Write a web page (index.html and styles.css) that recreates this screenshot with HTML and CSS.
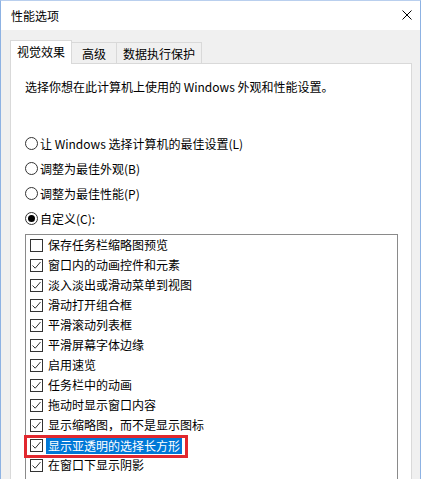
FILE: index.html
```html
<!DOCTYPE html>
<html lang="zh-CN">
<head>
<meta charset="utf-8">
<title>性能选项</title>
<link rel="stylesheet" href="styles.css">
</head>
<body>
<div class="window">
  <div class="titlebar">
    <span class="title">性能选项</span>
    <svg class="close" width="10" height="10" viewBox="0 0 10 10"><path d="M0.5 0.5 L9.5 9.5 M9.5 0.5 L0.5 9.5" stroke="#000" stroke-width="1" fill="none"/></svg>
  </div>
  <div class="content">
    <div class="tabs">
      <div class="tab tab-active tab-w1">视觉效果</div>
      <div class="tab tab-w2">高级</div>
      <div class="tab tab-w3">数据执行保护</div>
    </div>
    <div class="panel">
      <div class="desc">选择你想在此计算机上使用的 Windows 外观和性能设置。</div>
      <div class="radios">
        <div class="radio-row"><span class="radio"></span><span>让 Windows 选择计算机的最佳设置(L)</span></div>
        <div class="radio-row"><span class="radio"></span><span>调整为最佳外观(B)</span></div>
        <div class="radio-row"><span class="radio"></span><span>调整为最佳性能(P)</span></div>
        <div class="radio-row"><span class="radio radio-on"></span><span>自定义(C):</span></div>
      </div>
      <div class="list">
        <div class="item"><span class="cb"></span><span class="label">保存任务栏缩略图预览</span></div>
        <div class="item"><span class="cb"><svg width="11" height="11" viewBox="0 0 11 11"><path d="M1.5 5.5 L4.2 8.2 L9.5 2" stroke="#333" stroke-width="1" fill="none"/></svg></span><span class="label">窗口内的动画控件和元素</span></div>
        <div class="item"><span class="cb"><svg width="11" height="11" viewBox="0 0 11 11"><path d="M1.5 5.5 L4.2 8.2 L9.5 2" stroke="#333" stroke-width="1" fill="none"/></svg></span><span class="label">淡入淡出或滑动菜单到视图</span></div>
        <div class="item"><span class="cb"><svg width="11" height="11" viewBox="0 0 11 11"><path d="M1.5 5.5 L4.2 8.2 L9.5 2" stroke="#333" stroke-width="1" fill="none"/></svg></span><span class="label">滑动打开组合框</span></div>
        <div class="item"><span class="cb"><svg width="11" height="11" viewBox="0 0 11 11"><path d="M1.5 5.5 L4.2 8.2 L9.5 2" stroke="#333" stroke-width="1" fill="none"/></svg></span><span class="label">平滑滚动列表框</span></div>
        <div class="item"><span class="cb"><svg width="11" height="11" viewBox="0 0 11 11"><path d="M1.5 5.5 L4.2 8.2 L9.5 2" stroke="#333" stroke-width="1" fill="none"/></svg></span><span class="label">平滑屏幕字体边缘</span></div>
        <div class="item"><span class="cb"><svg width="11" height="11" viewBox="0 0 11 11"><path d="M1.5 5.5 L4.2 8.2 L9.5 2" stroke="#333" stroke-width="1" fill="none"/></svg></span><span class="label">启用速览</span></div>
        <div class="item"><span class="cb"><svg width="11" height="11" viewBox="0 0 11 11"><path d="M1.5 5.5 L4.2 8.2 L9.5 2" stroke="#333" stroke-width="1" fill="none"/></svg></span><span class="label">任务栏中的动画</span></div>
        <div class="item"><span class="cb"><svg width="11" height="11" viewBox="0 0 11 11"><path d="M1.5 5.5 L4.2 8.2 L9.5 2" stroke="#333" stroke-width="1" fill="none"/></svg></span><span class="label">拖动时显示窗口内容</span></div>
        <div class="item"><span class="cb"><svg width="11" height="11" viewBox="0 0 11 11"><path d="M1.5 5.5 L4.2 8.2 L9.5 2" stroke="#333" stroke-width="1" fill="none"/></svg></span><span class="label">显示缩略图，而不是显示图标</span></div>
        <div class="item item-marked"><span class="cb"><svg width="11" height="11" viewBox="0 0 11 11"><path d="M1.5 5.5 L4.2 8.2 L9.5 2" stroke="#333" stroke-width="1" fill="none"/></svg></span><span class="label label-selected">显示亚透明的选择长方形</span><span class="annot"></span></div>
        <div class="item"><span class="cb"><svg width="11" height="11" viewBox="0 0 11 11"><path d="M1.5 5.5 L4.2 8.2 L9.5 2" stroke="#333" stroke-width="1" fill="none"/></svg></span><span class="label">在窗口下显示阴影</span></div>
      </div>
    </div>
  </div>
</div>
</body>
</html>
```
FILE: styles.css
```css
* { box-sizing: border-box; }
html, body { margin: 0; padding: 0; }
body {
  font-family: "Noto Sans CJK SC", "Microsoft YaHei", sans-serif;
  font-size: 12px;
  color: #000;
  background: #fff;
}
.window {
  width: 421px;
  height: 479px;
  overflow: hidden;
  background: #f0f0f0;
  border-left: 1px solid #8db2e3;
  border-right: 1px solid #8db2e3;
  border-top: 1px solid #b9cfee;
}
.titlebar {
  height: 29px;
  background: #fff;
  display: flex;
  align-items: center;
  justify-content: space-between;
  padding: 0 8px 0 10px;
}
.title { line-height: 16px; }
.close { display: block; margin-top: -2px; }
.content {
  padding: 10px 7px 0 9px;
}
.tabs {
  display: flex;
  align-items: flex-end;
  height: 23px;
}
.tab {
  height: 21px;
  border: 1px solid #d9d9d9;
  border-bottom: none;
  background: #f0f0f0;
  display: flex;
  align-items: center;
  justify-content: center;
  line-height: 16px;
  padding-top: 1px;
}
.tab + .tab { border-left: none; }
.tab-active {
  height: 24px;
  margin-bottom: -1px;
  background: #fff;
  position: relative;
  z-index: 1;
  padding-top: 0;
  padding-bottom: 2px;
}
.tab-w1 { width: 62px; }
.tab-w2 { width: 45px; }
.tab-w3 { width: 85px; }
.panel {
  width: 402px;
  height: 420px;
  background: #fff;
  border: 1px solid #d9d9d9;
  padding: 13px 0 0 14px;
}
.desc { line-height: 20px; }
.radios {
  margin-top: 34px;
}
.radio-row {
  height: 25px;
  display: flex;
  align-items: center;
  gap: 2px;
}
.radio {
  width: 13px;
  height: 13px;
  border: 1px solid #333;
  border-radius: 50%;
  display: flex;
  align-items: center;
  justify-content: center;
  flex: none;
}
.radio-on::after {
  content: "";
  width: 7px;
  height: 7px;
  border-radius: 50%;
  background: #000;
}
.list {
  margin-top: 3px;
  width: 373px;
  height: 280px;
  border: 1px solid #8a8a8a;
  padding: 0 0 0 4px;
}
.item {
  height: 20px;
  display: flex;
  align-items: center;
  position: relative;
}
.cb {
  width: 13px;
  height: 13px;
  border: 1px solid #333;
  display: flex;
  align-items: center;
  justify-content: center;
  flex: none;
  margin-right: 3px;
}
.cb svg { display: block; }
.label {
  line-height: 16px;
  padding: 0 2px;
}
.label-selected {
  background: #0078d7;
  color: #fff;
  margin-top: 2px;
}
.annot {
  position: absolute;
  left: -6px;
  top: 0;
  width: 164px;
  height: 23px;
  border: 3px solid #e1282e;
}
```
